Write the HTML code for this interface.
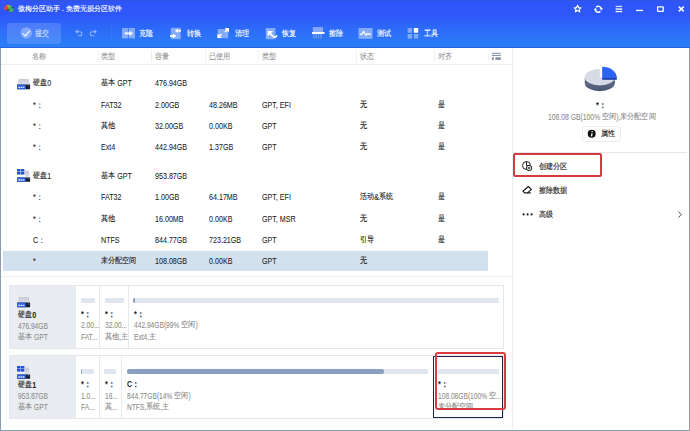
<!DOCTYPE html>
<html><head><meta charset="utf-8">
<style>
*{margin:0;padding:0;box-sizing:border-box}
html,body{width:690px;height:431px;overflow:hidden;background:#fff}
body{position:relative;font-family:"Liberation Sans",sans-serif;color:#222;font-size:8px}
.a{position:absolute}
.t{--s:.83;--adv:7.1;--fc:7.5;--fa:8;position:absolute;white-space:nowrap;height:12px;line-height:13px;font-size:8.6px;transform:scaleX(var(--s));transform-origin:0 50%;-webkit-text-stroke:.06px currentColor}
#hdr{left:0;top:0;width:690px;height:48px;background:linear-gradient(180deg,#3552dc 0px,#2f56f8 1.5px,#2e57fa 15px,#2d6cf8 30px,#2b7cf7 45px);border-bottom:1px solid #2862dc}
.w{color:#fff}
.hd{--s:.9;color:#999;font-size:7.7px;-webkit-text-stroke:0}
.g{--s:.8;color:#8c8c8c;-webkit-text-stroke:.08px currentColor;font-size:8.3px}
.sep{position:absolute;top:49.5px;width:1px;height:12.5px;background:#f0f1f4}
.card{position:absolute;left:9px;width:495px;border:1px solid #e4e7ec;background:#fff}
.dk{position:absolute;left:9px;width:67px;background:#e9ecf1}
.dv{position:absolute;width:1px;background:#e6e9ee}
.bar{position:absolute;height:5.3px;border-radius:1.2px;background:#dfe6f0;overflow:hidden}
.bar i{position:absolute;left:0;top:0;bottom:0;background:#8a9fc2;border-radius:2px}
.b{font-weight:bold;-webkit-text-stroke:0}
.c{font-weight:400;-webkit-text-stroke:.12px currentColor;display:inline-block;position:relative;top:-.7px;width:calc(var(--n)*var(--adv)*1px/var(--s));font-size:calc(var(--fc)*1px)}
.c i{font-style:normal;display:inline-block;transform:scaleX(calc(var(--adv)/(var(--fa)*var(--s))));transform-origin:0 50%}
</style></head><body>
<svg width="0" height="0" style="position:absolute">
<defs>
<linearGradient id="gface" x1="0" y1="0" x2="0" y2="1"><stop offset="0" stop-color="#c4c8d4"/><stop offset="1" stop-color="#dfe2ea"/></linearGradient>
<symbol id="d0" viewBox="0 0 14 11">
<path d="M1.6 .4 Q1.8 0 2.4 0 H11.2 Q11.8 0 12 .4 L12.9 5.6 H.7 Z" fill="url(#gface)"/>
<rect x=".1" y="5.6" width="13" height="4.6" rx=".4" fill="#141c30"/>
<rect x=".1" y="5.6" width="8.6" height="4.6" fill="#3263dc"/>
<circle cx="11.6" cy="7" r=".55" fill="#9aa"/>
<path d="M1.4 8.4 h1.6 M3.6 8.4 h1.6 M5.8 8.4 h1.6" stroke="#dfe8ff" stroke-width="1.3"/>
</symbol>
<symbol id="d1" viewBox="0 0 14 13">
<path d="M8 1.8 H11.9 L12.8 8.4 H8 Z" fill="url(#gface)"/>
<rect x="0" y="0" width="3.5" height="2.6" fill="#2352d6"/>
<rect x="3.9" y="0" width="3.5" height="2.6" fill="#2352d6"/>
<rect x="0" y="3" width="3.5" height="2.6" fill="#2352d6"/>
<rect x="3.9" y="3" width="3.5" height="2.6" fill="#2352d6"/>
<rect x=".1" y="8.4" width="13" height="4.3" rx=".4" fill="#141c30"/>
<rect x=".1" y="8.4" width="8.6" height="4.3" fill="#3263dc"/>
<circle cx="11.6" cy="9.8" r=".55" fill="#9aa"/>
<path d="M1.4 11 h1.6 M3.6 11 h1.6 M5.8 11 h1.6" stroke="#dfe8ff" stroke-width="1.3"/>
</symbol>
</defs></svg>
<div id="hdr" class="a"></div>
<!-- logo -->
<svg class="a" style="left:3px;top:3px" width="12" height="11" viewBox="3 3 12 11">
<path d="M4.2 9.8 C3.8 7.5 4.8 5 7 4.6 C8.2 4.4 9 5 9.4 6 L8.6 9.6 C7.5 10.4 5.5 10.6 4.2 9.8Z" fill="#e0443c"/>
<path d="M7.6 5.2 C9.2 4.8 11 5.4 12.4 6.6 C13.6 7.6 13.8 9.8 13.2 11.4 C12 12.3 10 12.3 9 11.2 C8.6 10.2 8.4 8.6 7.6 7.6 Z" fill="#3cb35a"/>
<path d="M7.4 5 C8.5 4.9 9.6 5.4 10 6.4 L8.4 7.8 C8 7 7.6 6.4 7.2 6 Z" fill="#c8b04a" opacity=".8"/>
<path d="M6 10.2 C7 9.2 8 8.6 9.2 9.4 L9.4 11 C8.2 11.2 7 10.9 6 10.2Z" fill="#7a2a2a" opacity=".7"/>
<circle cx="12.6" cy="7.4" r=".9" fill="#1a3a90"/>
</svg>
<div class="t w" style="left:18px;top:3px;font-size:7.6px;--s:.865;--fc:6.8;--fa:7;--adv:7"><span class="c" style="--n:6"><i>傲梅分区助手</i></span> - <span class="c" style="--n:8"><i>免费无损分区软件</i></span></div>

<!-- window controls -->
<svg class="a" style="left:572px;top:4px" width="112" height="10" viewBox="572 4 112 10">
<path d="M577.6 5.3 L578.6 7.6 L581 7.8 L579.2 9.4 L579.8 11.8 L577.6 10.5 L575.4 11.8 L576 9.4 L574.2 7.8 L576.6 7.6 Z" fill="none" stroke="#fff" stroke-width="1.2" stroke-linejoin="round"/>
<path d="M596.2 7.2 A3 3 0 0 1 601.2 8.4" fill="none" stroke="#fff" stroke-width="1.5"/>
<path d="M599.6 8.3 L603 8.3 L601.3 10.6 Z" fill="#fff"/>
<path d="M600.4 11.4 A3 3 0 0 1 595.4 10.1" fill="none" stroke="#fff" stroke-width="1.5"/>
<path d="M593.7 10.2 L597.1 10.2 L595.4 7.8 Z" fill="#fff"/>
<rect x="615.6" y="5.8" width="6.6" height="1.3" fill="#fff" opacity=".8"/>
<rect x="615.6" y="8.4" width="6.6" height="1.3" fill="#fff"/>
<rect x="615.6" y="10.9" width="6.6" height="1.3" fill="#fff"/>
<rect x="636" y="9.8" width="7" height="1.3" fill="#fff"/>
<rect x="657.6" y="6.8" width="5.6" height="4.6" fill="none" stroke="#fff" stroke-width="1.3" rx=".4"/>
<path d="M678.8 6.6 L683.8 11.4 M683.8 6.6 L678.8 11.4" stroke="#fff" stroke-width="1.5"/>
</svg>

<!-- toolbar -->
<div class="a" style="left:7px;top:23px;width:54px;height:21px;background:rgba(255,255,255,0.15);border-radius:3px"></div>
<svg class="a" style="left:20px;top:27px" width="13" height="13" viewBox="0 0 13 13">
<circle cx="6.3" cy="5.9" r="5.7" fill="rgba(255,255,255,.3)"/>
<path d="M2.8 6.4 L5.4 8.9 L9.8 3.6" fill="none" stroke="rgba(255,255,255,.85)" stroke-width="1.4"/>
</svg>
<div class="t" style="left:35px;top:27.5px;color:rgba(255,255,255,.72)"><span class="c" style="--n:2"><i>提交</i></span></div>
<svg class="a" style="left:74px;top:29px" width="24" height="8" viewBox="74 29 24 8">
<path d="M76.2 31.7 L79.9 31.7 A2 2 0 0 1 79.9 35.7 L77.8 35.7" fill="none" stroke="rgba(255,255,255,.45)" stroke-width="1.1"/>
<path d="M77.8 30 L76 31.7 L77.8 33.4" fill="none" stroke="rgba(255,255,255,.45)" stroke-width="1.1"/>
<path d="M96 31.7 L92.3 31.7 A2 2 0 0 0 92.3 35.7 L94.4 35.7" fill="none" stroke="rgba(255,255,255,.45)" stroke-width="1.1"/>
<path d="M94.4 30 L96.2 31.7 L94.4 33.4" fill="none" stroke="rgba(255,255,255,.45)" stroke-width="1.1"/>
</svg>
<div class="a" style="left:111px;top:24px;width:1px;height:18px;background:rgba(255,255,255,.045)"></div>

<svg class="a" style="left:120px;top:26px" width="320" height="15" viewBox="120 26 320 15">
<!-- clone -->
<rect x="122" y="28" width="6.2" height="10.4" fill="rgba(255,255,255,.42)"/>
<rect x="128.9" y="28" width="6.1" height="10.4" fill="rgba(255,255,255,.42)"/>
<path d="M124.7 33.4 L130 33.4" stroke="#fff" stroke-width="1.8"/>
<path d="M129.3 30.8 L133 33.4 L129.3 36 Z" fill="#fff"/>
<!-- convert -->
<rect x="170.8" y="27.8" width="9.8" height="11.4" fill="rgba(255,255,255,.42)"/>
<path d="M177.5 30.7 L181 30.7" stroke="#fff" stroke-width="1.8"/>
<path d="M178 28.4 L174.8 30.7 L178 33 Z" fill="#fff"/>
<path d="M170 36 L173.8 36" stroke="#fff" stroke-width="1.8"/>
<path d="M173.2 33.7 L176.5 36 L173.2 38.3 Z" fill="#fff"/>
<!-- clean -->
<rect x="217.8" y="29" width="10.4" height="9.2" fill="rgba(255,255,255,.42)"/>
<path d="M218.5 37 L221.5 34 M225 32 L228 29" stroke="#fff" stroke-width="1.6"/>
<path d="M217.3 33.6 L217.3 38 L221.7 38 Z" fill="#fff"/>
<path d="M229 28 L224.6 28 L229 32.4 Z" fill="#fff"/>
<!-- recover -->
<rect x="265.8" y="28" width="9.6" height="11.2" fill="rgba(255,255,255,.42)"/>
<path d="M267.6 31 L273.2 31 L267.6 36.6 Z" fill="#fff"/>
<path d="M269.8 33.2 L272.8 36.2 Q275.4 38.4 277 35.4" fill="none" stroke="#fff" stroke-width="1.7"/>
<!-- wipe -->
<rect x="312.8" y="27.1" width="10.2" height="5" fill="rgba(255,255,255,.42)"/>
<rect x="311.8" y="32.1" width="12.9" height="1.9" rx=".9" fill="#fff"/>
<path d="M313.8 34 V38.6 M316.2 34 V38.6 M318.6 34 V38.6 M321 34 V38.6" stroke="rgba(255,255,255,.3)" stroke-width="1.4"/>
<!-- test -->
<rect x="358.5" y="28" width="14" height="10.8" fill="rgba(255,255,255,.42)"/>
<path d="M360 34.2 L362 34.2 L363.6 31.4 L366 35.3 L367.7 33.3 L369 34.2 L371 34.2" fill="none" stroke="#fff" stroke-width="1.2" stroke-linejoin="round"/>
<!-- tools -->
<rect x="407.6" y="28" width="4.4" height="4.7" fill="rgba(255,255,255,.4)"/>
<rect x="413.8" y="28" width="4.4" height="4.7" fill="#fff"/>
<rect x="407.6" y="34" width="4.4" height="4.6" fill="rgba(255,255,255,.4)"/>
<rect x="413.8" y="34" width="4.4" height="4.6" fill="rgba(255,255,255,.4)"/>
</svg>
<div class="t w" style="left:139px;top:27.5px"><span class="c" style="--n:2"><i>克隆</i></span></div>
<div class="t w" style="left:187px;top:27.5px"><span class="c" style="--n:2"><i>转换</i></span></div>
<div class="t w" style="left:235px;top:27.5px"><span class="c" style="--n:2"><i>清理</i></span></div>
<div class="t w" style="left:282px;top:27.5px"><span class="c" style="--n:2"><i>恢复</i></span></div>
<div class="t w" style="left:329px;top:27.5px"><span class="c" style="--n:2"><i>擦除</i></span></div>
<div class="t w" style="left:376.5px;top:27.5px"><span class="c" style="--n:2"><i>测试</i></span></div>
<div class="t w" style="left:424px;top:27.5px"><span class="c" style="--n:2"><i>工具</i></span></div>

<!-- table header -->
<div class="a" style="left:1px;top:64px;width:512px;height:1px;background:#eceef2"></div>
<div class="sep" style="left:98px"></div>
<div class="sep" style="left:151px"></div>
<div class="sep" style="left:204.5px"></div>
<div class="sep" style="left:258px"></div>
<div class="sep" style="left:356px"></div>
<div class="sep" style="left:434px"></div>
<div class="t hd" style="left:32px;top:50.7px"><span class="c" style="--n:2"><i>名称</i></span></div>
<div class="t hd" style="left:101px;top:50.7px"><span class="c" style="--n:2"><i>类型</i></span></div>
<div class="t hd" style="left:155px;top:50.7px"><span class="c" style="--n:2"><i>容量</i></span></div>
<div class="t hd" style="left:208.5px;top:50.7px"><span class="c" style="--n:3"><i>已使用</i></span></div>
<div class="t hd" style="left:261.5px;top:50.7px"><span class="c" style="--n:2"><i>类型</i></span></div>
<div class="t hd" style="left:359.5px;top:50.7px"><span class="c" style="--n:2"><i>状态</i></span></div>
<div class="t hd" style="left:437.5px;top:50.7px"><span class="c" style="--n:2"><i>对齐</i></span></div>
<svg class="a" style="left:490px;top:52px" width="12" height="9" viewBox="490 52 12 9">
<rect x="491.9" y="52.8" width="9" height="1" fill="#7e889e"/>
<rect x="491.9" y="54.9" width="9" height="1" fill="#7e889e"/>
<rect x="491.9" y="57.2" width="2" height="2.7" fill="#8a93a8"/>
<rect x="495.4" y="57.2" width="5.5" height="2.7" fill="#8a93a8"/>
</svg>
<div class="sep" style="left:487.5px;top:52px;height:10px;background:#f3f4f6"></div>

<!-- rows -->
<div class="a" style="left:3px;top:251px;width:485px;height:20px;background:#d3e0ee"></div>
<div class="a" style="left:1px;top:276px;width:512px;height:1px;background:#e8ebf0"></div>
<div class="a" style="left:512px;top:48px;width:1px;height:381px;background:#eceef2"></div>

<!-- disk icons -->
<svg class="a" style="left:17.1px;top:79px" width="14" height="11"><use href="#d0"/></svg>
<svg class="a" style="left:17.1px;top:169px" width="14" height="13"><use href="#d1"/></svg>

<div class="t" style="left:33px;top:77px"><span class="c" style="--n:2"><i>硬盘</i></span>0</div>
<div class="t" style="left:101px;top:77px"><span class="c" style="--n:2"><i>基本</i></span> GPT</div>
<div class="t" style="left:155px;top:77px">476.94GB</div>

<div class="t" style="left:32.5px;top:98.5px">*：</div>
<div class="t" style="left:101px;top:98.5px">FAT32</div>
<div class="t" style="left:155px;top:98.5px">2.00GB</div>
<div class="t" style="left:208.5px;top:98.5px">48.26MB</div>
<div class="t" style="left:262px;top:98.5px">GPT, EFI</div>
<div class="t" style="left:360px;top:98.5px"><span class="c" style="--n:1"><i>无</i></span></div>
<div class="t" style="left:438px;top:98.5px"><span class="c" style="--n:1"><i>是</i></span></div>

<div class="t" style="left:32.5px;top:119.5px">*：</div>
<div class="t" style="left:101px;top:119.5px"><span class="c" style="--n:2"><i>其他</i></span></div>
<div class="t" style="left:155px;top:119.5px">32.00GB</div>
<div class="t" style="left:208.5px;top:119.5px">0.00KB</div>
<div class="t" style="left:262px;top:119.5px">GPT</div>
<div class="t" style="left:360px;top:119.5px"><span class="c" style="--n:1"><i>无</i></span></div>
<div class="t" style="left:438px;top:119.5px"><span class="c" style="--n:1"><i>是</i></span></div>

<div class="t" style="left:32.5px;top:141px">*：</div>
<div class="t" style="left:101px;top:141px">Ext4</div>
<div class="t" style="left:155px;top:141px">442.94GB</div>
<div class="t" style="left:208.5px;top:141px">1.37GB</div>
<div class="t" style="left:262px;top:141px">GPT</div>
<div class="t" style="left:360px;top:141px"><span class="c" style="--n:1"><i>无</i></span></div>
<div class="t" style="left:438px;top:141px"><span class="c" style="--n:1"><i>是</i></span></div>

<div class="t" style="left:33px;top:169.5px"><span class="c" style="--n:2"><i>硬盘</i></span>1</div>
<div class="t" style="left:101px;top:169.5px"><span class="c" style="--n:2"><i>基本</i></span> GPT</div>
<div class="t" style="left:155px;top:169.5px">953.87GB</div>

<div class="t" style="left:32.5px;top:191px">*：</div>
<div class="t" style="left:101px;top:191px">FAT32</div>
<div class="t" style="left:155px;top:191px">1.00GB</div>
<div class="t" style="left:208.5px;top:191px">64.17MB</div>
<div class="t" style="left:262px;top:191px">GPT, EFI</div>
<div class="t" style="left:360px;top:191px"><span class="c" style="--n:2"><i>活动</i></span>&amp;<span class="c" style="--n:2"><i>系统</i></span></div>
<div class="t" style="left:438px;top:191px"><span class="c" style="--n:1"><i>是</i></span></div>

<div class="t" style="left:32.5px;top:212.5px">*：</div>
<div class="t" style="left:101px;top:212.5px"><span class="c" style="--n:2"><i>其他</i></span></div>
<div class="t" style="left:155px;top:212.5px">16.00MB</div>
<div class="t" style="left:208.5px;top:212.5px">0.00KB</div>
<div class="t" style="left:262px;top:212.5px">GPT, MSR</div>
<div class="t" style="left:360px;top:212.5px"><span class="c" style="--n:1"><i>无</i></span></div>
<div class="t" style="left:438px;top:212.5px"><span class="c" style="--n:1"><i>是</i></span></div>

<div class="t" style="left:32.5px;top:234px">C：</div>
<div class="t" style="left:101px;top:234px">NTFS</div>
<div class="t" style="left:155px;top:234px">844.77GB</div>
<div class="t" style="left:208.5px;top:234px">723.21GB</div>
<div class="t" style="left:262px;top:234px">GPT</div>
<div class="t" style="left:360px;top:234px"><span class="c" style="--n:2"><i>引导</i></span></div>
<div class="t" style="left:438px;top:234px"><span class="c" style="--n:1"><i>是</i></span></div>

<div class="t" style="left:32.5px;top:255px">*</div>
<div class="t" style="left:101px;top:255px"><span class="c" style="--n:5"><i>未分配空间</i></span></div>
<div class="t" style="left:155px;top:255px">108.08GB</div>
<div class="t" style="left:208.5px;top:255px">0.00KB</div>
<div class="t" style="left:262px;top:255px">GPT</div>
<div class="t" style="left:360px;top:255px"><span class="c" style="--n:1"><i>无</i></span></div>

<!-- disk map -->
<div class="card" style="top:284.5px;height:64px"></div>
<div class="dk" style="top:285.5px;height:62px;left:10px;width:66px"></div>
<div class="dv" style="left:99px;top:285.5px;height:62px"></div>
<div class="dv" style="left:128px;top:285.5px;height:62px"></div>
<svg class="a" style="left:17.4px;top:297px" width="14" height="11"><use href="#d0"/></svg>
<div class="t b" style="left:17.5px;top:308.5px"><span class="c" style="--n:2"><i>硬盘</i></span>0</div>
<div class="t g" style="left:17.5px;top:319.5px">476.94GB</div>
<div class="t g" style="left:17.5px;top:331px"><span class="c" style="--n:2"><i>基本</i></span> GPT</div>
<div class="bar" style="left:80.5px;top:298.2px;width:14.7px"></div>
<div class="bar" style="left:104.9px;top:298.2px;width:18.7px"></div>
<div class="bar" style="left:133.3px;top:298.2px;width:365.5px"><i style="width:1.8px"></i></div>
<div class="t b" style="left:81px;top:307.5px">*：</div>
<div class="t g" style="left:81px;top:319px">2.00...</div>
<div class="t g" style="left:81px;top:330.5px">FAT...</div>
<div class="t b" style="left:105px;top:307.5px">*：</div>
<div class="t g" style="left:105px;top:319px">32.00...</div>
<div class="t g" style="left:105px;top:330.5px"><span class="c" style="--n:2"><i>其他</i></span>,<span class="c" style="--n:1"><i>主</i></span></div>
<div class="t b" style="left:133.5px;top:307.5px">*：</div>
<div class="t g" style="left:133.5px;top:319px">442.94GB(99% <span class="c" style="--n:2"><i>空闲</i></span>)</div>
<div class="t g" style="left:133.5px;top:330.5px">Ext4,<span class="c" style="--n:1"><i>主</i></span></div>

<div class="card" style="top:355px;height:63.5px"></div>
<div class="dk" style="top:356px;height:61.5px;left:10px;width:66px"></div>
<div class="dv" style="left:98.5px;top:356px;height:61.5px"></div>
<div class="dv" style="left:121px;top:356px;height:61.5px"></div>
<svg class="a" style="left:17.4px;top:365.6px" width="14" height="13"><use href="#d1"/></svg>
<div class="t b" style="left:17.5px;top:378.5px"><span class="c" style="--n:2"><i>硬盘</i></span>1</div>
<div class="t g" style="left:17.5px;top:389.5px">953.87GB</div>
<div class="t g" style="left:17.5px;top:401px"><span class="c" style="--n:2"><i>基本</i></span> GPT</div>
<div class="bar" style="left:80.8px;top:368.8px;width:12.9px"><i style="width:1.7px"></i></div>
<div class="bar" style="left:104.2px;top:368.8px;width:12.1px"></div>
<div class="bar" style="left:126.7px;top:368.8px;width:301px"><i style="width:257px"></i></div>
<div class="bar" style="left:438px;top:368.8px;width:60.7px"></div>
<div class="t b" style="left:81px;top:378px">*：</div>
<div class="t g" style="left:81px;top:389.5px">1.0...</div>
<div class="t g" style="left:81px;top:400.5px">FA...</div>
<div class="t b" style="left:104.5px;top:378px">*：</div>
<div class="t g" style="left:104.5px;top:389.5px">16...</div>
<div class="t g" style="left:104.5px;top:400.5px"><span class="c" style="--n:1"><i>其</i></span>...</div>
<div class="t b" style="left:127px;top:378px">C：</div>
<div class="t g" style="left:127px;top:389.5px">844.77GB(14% <span class="c" style="--n:2"><i>空闲</i></span>)</div>
<div class="t g" style="left:127px;top:400.5px">NTFS,<span class="c" style="--n:2"><i>系统</i></span>,<span class="c" style="--n:1"><i>主</i></span></div>
<div class="t b" style="left:438px;top:378px">*：</div>
<div class="t g" style="left:438px;top:389.5px">108.08GB(100% <span class="c" style="--n:1"><i>空</i></span>...</div>
<div class="t g" style="left:438px;top:400.5px"><span class="c" style="--n:5"><i>未分配空间</i></span></div>
<div class="a" style="left:433.3px;top:356px;width:69.7px;height:61.6px;border:1.6px solid #1c2258"></div>
<div class="a" style="left:434.6px;top:352.4px;width:71.7px;height:58px;border:2px solid #d83c42;border-radius:3px"></div>

<!-- right panel -->
<svg class="a" style="left:582px;top:64px" width="38" height="30" viewBox="582 64 38 30">
<defs><linearGradient id="gside" x1="0" y1="0" x2="0" y2="1"><stop offset="0" stop-color="#6a7792"/><stop offset="1" stop-color="#4c5873"/></linearGradient></defs>
<ellipse cx="599.8" cy="83" rx="15" ry="8.3" fill="url(#gside)"/>
<rect x="584.8" y="77.2" width="30" height="5.8" fill="url(#gside)"/>
<ellipse cx="599.8" cy="77.2" rx="15" ry="8.3" fill="#d7dbe5"/>
<path d="M599.8 77.2 L599.8 68.9 A15 8.3 0 0 1 614.8 77.2 Z" fill="#fff"/>
<path d="M602.2 77.6 L616.8 77.6 L616.8 79.8 L602.2 79.8 Z" fill="#1c3fb5"/>
<path d="M602.2 78 L602.2 66.8 A14.6 11.2 0 0 1 616.8 78 Z" fill="#2b63f3"/>
</svg>
<div class="t b" style="left:596px;top:99px">*：</div>
<div class="t g" style="left:548px;top:111px;--s:.82">108.08 GB(100% <span class="c" style="--n:2"><i>空闲</i></span>),<span class="c" style="--n:5"><i>未分配空间</i></span></div>
<div class="a" style="left:582px;top:125.5px;width:38.5px;height:16.7px;border:1px solid #ececec;border-radius:3px"></div>
<svg class="a" style="left:587px;top:129px" width="10" height="10" viewBox="0 0 10 10">
<circle cx="4.7" cy="4.7" r="4" fill="#111"/>
<circle cx="5.1" cy="2.7" r=".7" fill="#fff"/><path d="M5 4.3 L4.5 7.3" stroke="#fff" stroke-width="1.3" fill="none"/>
</svg>
<div class="t" style="left:601px;top:128px"><span class="c" style="--n:2"><i>属性</i></span></div>
<div class="a" style="left:513px;top:151.7px;width:174px;height:1px;background:#e6e6e6"></div>
<div class="a" style="left:512.5px;top:153.3px;width:89px;height:24.2px;border:2px solid #d63a40;border-radius:2px"></div>
<svg class="a" style="left:520px;top:159px" width="14" height="13" viewBox="520 159 14 13">
<circle cx="526.5" cy="165.5" r="4" fill="none" stroke="#222" stroke-width="1"/>
<path d="M526.5 161.5 V165.5 H530.5" fill="none" stroke="#222" stroke-width="1"/>
<circle cx="529.1" cy="168" r="2.7" fill="#fff" stroke="#222" stroke-width="1"/>
<path d="M529.1 166.6 V169.4 M527.7 168 H530.5" stroke="#222" stroke-width=".9"/>
</svg>
<div class="t" style="left:539px;top:160.5px"><span class="c" style="--n:4"><i>创建分区</i></span></div>
<svg class="a" style="left:521px;top:185px" width="13" height="10" viewBox="521 185 13 10">
<path d="M522.9 191.2 L528.4 186.5 L531.3 189.4 L527.6 192.9 L524.6 192.9 Z" fill="none" stroke="#1a1a1a" stroke-width="1.15" stroke-linejoin="round"/>
<path d="M527.6 192.9 H530.9" stroke="#1a1a1a" stroke-width="1.15"/>
</svg>
<div class="t" style="left:539px;top:184.5px"><span class="c" style="--n:4"><i>擦除数据</i></span></div>
<svg class="a" style="left:521px;top:212px" width="13" height="5" viewBox="521 212 13 5">
<circle cx="523.6" cy="214.4" r="1.05" fill="#1a1a1a"/>
<circle cx="527.6" cy="214.4" r="1.05" fill="#1a1a1a"/>
<circle cx="531.6" cy="214.4" r="1.05" fill="#1a1a1a"/>
</svg>
<div class="t" style="left:539px;top:208.5px"><span class="c" style="--n:2"><i>高级</i></span></div>
<svg class="a" style="left:677px;top:210px" width="6" height="9" viewBox="677 210 6 9">
<path d="M678.5 211.5 L681.3 214.5 L678.5 217.5" fill="none" stroke="#555" stroke-width="1"/>
</svg>

<!-- window border -->
<div class="a" style="left:0;top:48px;width:1px;height:383px;background:#8a9bb0"></div>
<div class="a" style="left:689px;top:48px;width:1px;height:383px;background:#8a9bb0"></div>
<div class="a" style="left:0;top:430px;width:690px;height:1px;background:#87a0b2"></div>
</body></html>
